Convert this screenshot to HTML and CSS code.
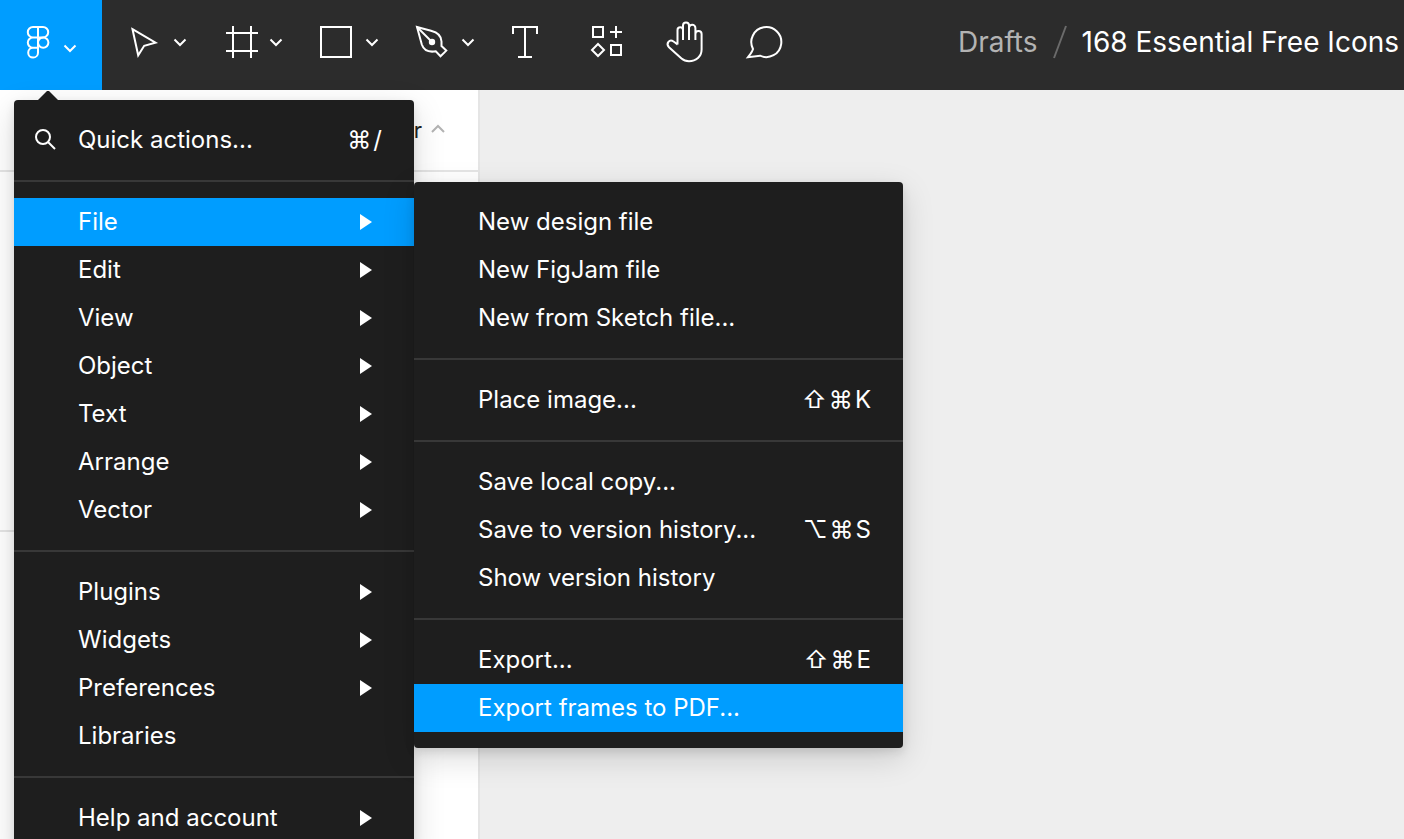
FILE: index.html
```html
<!DOCTYPE html>
<html lang="en">
<head>
<meta charset="utf-8">
<meta name="viewport" content="width=device-width, initial-scale=1">
<title>168 Essential Free Icons</title>
<link rel="stylesheet" href="styles.css">
</head>
<body>
<header class="toolbar">
  <button class="main-button" type="button" aria-label="Main menu" aria-expanded="true">
    <svg class="logo" viewBox="0 0 24 40" aria-hidden="true"><path d="M12 2H7a5.200 5.200 0 0 0 0 10.400h5zM12 2h5a5.200 5.200 0 0 1 0 10.400h-5zM12 12.400H7a5.200 5.200 0 0 0 0 10.400h5zM12 22.800H7a4.900 4.900 0 1 0 5 4.900z"/><circle cx="17.200" cy="17.600" r="5.200"/></svg>
    <svg class="chevron" viewBox="0 0 16 16" aria-hidden="true"><path d="M2.500 8.500 8 14l5.500-5.500"/></svg>
  </button>
  <nav class="tools" aria-label="Tools">
    <button class="tool tool-split" type="button" aria-label="Move">
      <svg class="icon" viewBox="0 0 48 48" aria-hidden="true"><path d="M12.500 8.200 35.500 21.600 24.200 24.800 18.200 34.300z"/></svg>
      <svg class="chevron" viewBox="0 0 16 16" aria-hidden="true"><path d="M2.500 2.500 8 8l5.500-5.500"/></svg>
    </button>
    <button class="tool tool-split" type="button" aria-label="Frame">
      <svg class="icon" viewBox="0 0 48 48" aria-hidden="true"><path d="M17 5v32M35 5v32M10 12h32M10 30h32"/></svg>
      <svg class="chevron" viewBox="0 0 16 16" aria-hidden="true"><path d="M2.500 2.500 8 8l5.500-5.500"/></svg>
    </button>
    <button class="tool tool-split" type="button" aria-label="Rectangle">
      <svg class="icon" viewBox="0 0 48 48" aria-hidden="true"><path d="M9 6h30v30H9z"/></svg>
      <svg class="chevron" viewBox="0 0 16 16" aria-hidden="true"><path d="M2.500 2.500 8 8l5.500-5.500"/></svg>
    </button>
    <button class="tool tool-split" type="button" aria-label="Pen">
      <svg class="icon" viewBox="0 0 48 48" aria-hidden="true"><path d="M9 6 23 9.700C30 11.500 33.500 15.500 33.500 20.500V25L38.300 29.600 32.500 35.300 27.800 30.300C20.500 31.500 15.800 29.500 13.800 23.500z"/><path d="M9 6 24 21"/><circle class="solid" cx="24" cy="21" r="3.200"/></svg>
      <svg class="chevron" viewBox="0 0 16 16" aria-hidden="true"><path d="M2.500 2.500 8 8l5.500-5.500"/></svg>
    </button>
    <button class="tool" type="button" aria-label="Text">
      <svg class="icon" viewBox="0 0 48 48" aria-hidden="true"><path d="M11 13V6h24v7M23 6v30M16 36h14"/></svg>
    </button>
    <button class="tool" type="button" aria-label="Resources">
      <svg class="icon" viewBox="0 0 48 48" aria-hidden="true"><path d="M11 6h10v10H11zM34 5v12M28 11h12M29 24h10v10H29zM16 23l6 6-6 6-6-6z"/></svg>
    </button>
    <button class="tool" type="button" aria-label="Hand">
      <svg class="icon" viewBox="0 0 48 48" aria-hidden="true"><path d="M15.500 23.500V9a2.750 2.750 0 0 1 5.500 0v10M21 9V4.500a3 3 0 0 1 6 0V19M27 7a3.200 3.200 0 0 1 6.400 0v12M33.400 13a3.100 3.100 0 0 1 6.200 0v15.500c0 7-5.600 11.700-12.600 11.700-3 0-5.500-.9-7.500-2.700L7 26.200C3.500 22.500 7.500 17.800 11.500 20.500c2 1.300 3 2.500 4 3"/></svg>
    </button>
    <button class="tool" type="button" aria-label="Comment">
      <svg class="icon" viewBox="0 0 48 48" aria-hidden="true"><path d="M11 28A15 15 0 1 1 18 34.700L6 36.200C8.500 33 10.200 31 11 28z"/></svg>
    </button>
  </nav>
  <div class="breadcrumb">
    <a class="folder" href="#drafts">Drafts</a>
    <svg class="slash" viewBox="0 0 14 34" aria-hidden="true"><path d="M1 33 13 1"/></svg>
    <span class="file-name">168 Essential Free Icons</span>
  </div>
</header>

<main class="workspace">
  <aside class="panel">
    <div class="panel-head">
      <button class="page-picker" type="button">r
        <svg class="chevron" viewBox="0 0 16 16" aria-hidden="true"><path d="M2 10 8 4l6 6"/></svg>
      </button>
    </div>
    <div class="pages"></div>
  </aside>
  <section class="canvas" aria-label="Canvas"></section>
</main>

<div class="menu main-menu">
  <svg class="pointer" viewBox="0 0 20 10" aria-hidden="true"><path d="M0 10 9 1h2l9 9z"/></svg>
  <div class="group">
    <button class="item" type="button">
      <svg class="search" viewBox="0 0 24 24" aria-hidden="true"><circle cx="9" cy="9" r="7"/><path d="m14 14 7 7"/></svg>
      <span class="label">Quick actions...</span><span class="keys"><kbd>⌘</kbd><kbd>/</kbd></span>
    </button>
  </div>
  <div class="group">
    <button class="item active" type="button"><span class="label">File</span><span class="arrow"></span></button>
    <button class="item" type="button"><span class="label">Edit</span><span class="arrow"></span></button>
    <button class="item" type="button"><span class="label">View</span><span class="arrow"></span></button>
    <button class="item" type="button"><span class="label">Object</span><span class="arrow"></span></button>
    <button class="item" type="button"><span class="label">Text</span><span class="arrow"></span></button>
    <button class="item" type="button"><span class="label">Arrange</span><span class="arrow"></span></button>
    <button class="item" type="button"><span class="label">Vector</span><span class="arrow"></span></button>
  </div>
  <div class="group">
    <button class="item" type="button"><span class="label">Plugins</span><span class="arrow"></span></button>
    <button class="item" type="button"><span class="label">Widgets</span><span class="arrow"></span></button>
    <button class="item" type="button"><span class="label">Preferences</span><span class="arrow"></span></button>
    <button class="item" type="button"><span class="label">Libraries</span></button>
  </div>
  <div class="group">
    <button class="item" type="button"><span class="label">Help and account</span><span class="arrow"></span></button>
  </div>
</div>

<div class="menu sub-menu">
  <div class="group">
    <button class="item" type="button"><span class="label">New design file</span></button>
    <button class="item" type="button"><span class="label">New FigJam file</span></button>
    <button class="item" type="button"><span class="label">New from Sketch file...</span></button>
  </div>
  <div class="group">
    <button class="item" type="button"><span class="label">Place image...</span><span class="keys"><kbd>⇧</kbd><kbd>⌘</kbd><kbd>K</kbd></span></button>
  </div>
  <div class="group">
    <button class="item" type="button"><span class="label">Save local copy...</span></button>
    <button class="item" type="button"><span class="label">Save to version history...</span><span class="keys"><kbd>⌥</kbd><kbd>⌘</kbd><kbd>S</kbd></span></button>
    <button class="item" type="button"><span class="label">Show version history</span></button>
  </div>
  <div class="group">
    <button class="item" type="button"><span class="label">Export...</span><span class="keys"><kbd>⇧</kbd><kbd>⌘</kbd><kbd>E</kbd></span></button>
    <button class="item active" type="button"><span class="label">Export frames to PDF...</span></button>
  </div>
</div>
</body>
</html>
```
FILE: styles.css
```css
* {
  box-sizing: border-box;
}

body {
  display: flex;
  flex-direction: column;
  height: 100vh;
  margin: 0;
  overflow: hidden;
  position: relative;
  font-family: Inter, "Liberation Sans", sans-serif;
  font-size: 24px;
  background: #eeeeee;
  -webkit-font-smoothing: antialiased;
}

button {
  margin: 0;
  padding: 0;
  border: 0;
  background: none;
  color: inherit;
  font: inherit;
}

svg {
  display: block;
  flex: none;
  fill: none;
  stroke: currentColor;
  stroke-width: 2;
}

.toolbar {
  display: flex;
  flex: none;
  height: 90px;
  background: #2c2c2c;
  color: #ffffff;
}

.main-button {
  display: flex;
  align-items: center;
  gap: 12px;
  width: 102px;
  padding-left: 26px;
  background: #009dff;
}

.logo {
  width: 24px;
  height: 40px;
}

.chevron {
  width: 16px;
  height: 16px;
}

.tools {
  display: flex;
}

.tool {
  display: flex;
  align-items: center;
  justify-content: center;
  width: 80px;
}

.tool-split {
  justify-content: flex-start;
  gap: 4px;
  width: 96px;
  padding-left: 18px;
}

.icon {
  width: 48px;
  height: 48px;
}

.icon .solid {
  fill: currentColor;
  stroke: none;
}

.breadcrumb {
  display: flex;
  align-items: center;
  gap: 15px;
  margin-left: auto;
  padding: 0 5px 6px 0;
  font-size: 28px;
  white-space: nowrap;
}

.folder {
  color: #b3b3b3;
  text-decoration: none;
}

.slash {
  width: 14px;
  height: 34px;
  color: #6b6b6b;
}

.workspace {
  display: flex;
  flex: 1;
}

.panel {
  width: 480px;
  border-right: 2px solid #e5e5e5;
  background: #ffffff;
}

.panel-head {
  display: flex;
  align-items: center;
  justify-content: flex-end;
  height: 82px;
  padding-right: 32px;
  border-bottom: 2px solid #e5e5e5;
}

.page-picker {
  display: flex;
  align-items: center;
  gap: 8px;
  font-size: 22px;
  color: #222222;
}

.page-picker .chevron {
  color: #b3b3b3;
}

.pages {
  height: 360px;
  border-bottom: 2px solid #e5e5e5;
}

.canvas {
  flex: 1;
}

.menu {
  position: absolute;
  border-radius: 4px;
  background: #1e1e1e;
  color: #ffffff;
  box-shadow: 0 4px 10px rgba(0, 0, 0, 0.1), 0 10px 32px rgba(0, 0, 0, 0.15);
}

.main-menu {
  top: 100px;
  left: 14px;
  width: 400px;
}

.sub-menu {
  top: 182px;
  left: 414px;
  width: 489px;
}

.pointer {
  position: absolute;
  top: -10px;
  left: 24px;
  width: 20px;
  height: 10px;
  fill: #1e1e1e;
  stroke: none;
}

.group {
  padding: 16px 0;
}

.group + .group {
  border-top: 2px solid #383838;
}

.item {
  display: grid;
  grid-template-columns: 64px 1fr auto;
  align-items: center;
  width: 100%;
  height: 48px;
  padding-right: 32px;
  text-align: left;
  white-space: nowrap;
}

.item.active {
  background: #009dff;
}

.search {
  grid-column: 1;
  grid-row: 1;
  justify-self: center;
  width: 24px;
  height: 24px;
}

.label,
.keys {
  padding-bottom: 2px;
}

.label {
  grid-column: 2;
}

.keys {
  display: flex;
  gap: 2px;
}

kbd {
  font: inherit;
}

.arrow {
  width: 12px;
  height: 16px;
  margin-right: 10px;
  background: currentColor;
  clip-path: polygon(0 0, 100% 50%, 0 100%);
}
```
